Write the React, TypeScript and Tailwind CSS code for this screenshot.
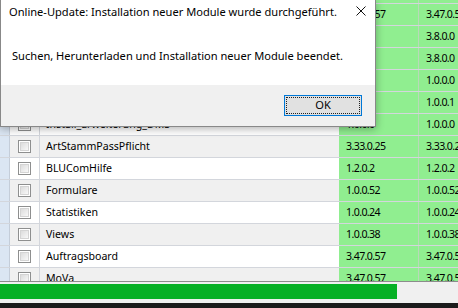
import React from 'react';

type Row = { name: string; v1: string; v2: string };

const ROWS: Row[] = [
  { name: 'BLUStart', v1: '3.47.0.57', v2: '3.47.0.57' },
  { name: 'BLUKernel', v1: '3.47.0.57', v2: '3.47.0.57' },
  { name: 'BLUDatenbank', v1: '3.8.0.0', v2: '3.8.0.0' },
  { name: 'BLUDatenbankUpdate', v1: '3.8.0.0', v2: '3.8.0.0' },
  { name: 'Install_Basis', v1: '1.0.0.0', v2: '1.0.0.0' },
  { name: 'Install_Updater', v1: '1.0.0.1', v2: '1.0.0.1' },
  { name: 'Install_Erweiterung_DMS', v1: '1.0.0.0', v2: '1.0.0.0' },
  { name: 'ArtStammPassPflicht', v1: '3.33.0.25', v2: '3.33.0.25' },
  { name: 'BLUComHilfe', v1: '1.2.0.2', v2: '1.2.0.2' },
  { name: 'Formulare', v1: '1.0.0.52', v2: '1.0.0.52' },
  { name: 'Statistiken', v1: '1.0.0.24', v2: '1.0.0.24' },
  { name: 'Views', v1: '1.0.0.38', v2: '1.0.0.38' },
  { name: 'Auftragsboard', v1: '3.47.0.57', v2: '3.47.0.57' },
  { name: 'MoVa', v1: '3.47.0.57', v2: '3.47.0.57' },
];

const font = "font-['Noto_Sans',sans-serif]";

const CheckBox: React.FC = () => (
  <span className="w-[13px] h-[13px] border border-[#8e8f8f] bg-white flex">
    <span className="flex-1 m-[1px] border border-[#d4d4d4] bg-gradient-to-br from-[#dcdcdc] to-[#f8f8f8]" />
  </span>
);

const App: React.FC = () => {
  return (
    <div className={`relative w-[458px] h-[308px] overflow-hidden bg-white text-black ${font}`}>
      {/* Modul-Tabelle */}
      <div className="h-[281px] overflow-hidden text-[10.6px]">
        <div className="-mt-[18px]">
          {ROWS.map((row, idx) => (
            <div
              key={row.name}
              className={`flex h-[22px] border-b border-[#d3d6dc] ${idx % 2 === 0 ? 'bg-white' : 'bg-[#f0f0f0]'}`}
            >
              <div className="w-[10px] bg-[#dbe6f3] border-r border-[#c4cdd9]" />
              <div className="w-[30px] flex items-center justify-center border-r border-[#d3d6dc] pr-[1px]">
                <CheckBox />
              </div>
              <div className="w-[299px] flex items-center pl-[6px] whitespace-nowrap overflow-hidden">{row.name}</div>
              <div className="w-[80px] flex items-center pl-[7px] bg-[#90ee90] border-r border-[#b9d9b9] tracking-[-0.6px]">
                {row.v1}
              </div>
              <div className="flex-1 flex items-center pl-[7px] bg-[#90ee90] whitespace-nowrap overflow-hidden tracking-[-0.6px]">
                {row.v2}
              </div>
            </div>
          ))}
        </div>
      </div>

      {/* Fortschrittsleiste */}
      <div className="h-[22px] border-t border-[#8c8c8c] bg-[#f0f0f0] pt-[2px]">
        <div className="h-[15px] w-[397px] bg-[#06b025]" />
      </div>
      <div className="h-[5px] bg-[#1b1b1b]" />

      {/* Dialog */}
      <div className="absolute left-0 top-0 w-[376px] h-[127px] flex flex-col bg-white text-[11.1px] border-x border-b border-[#888888] shadow-[0_2px_8px_rgba(0,0,0,0.3)]">
        <div className="h-[24px] flex items-center justify-between pl-[8px] pr-[9px]">
          <span className="whitespace-nowrap">Online-Update: Installation neuer Module wurde durchgeführt.</span>
          <svg width="10" height="10" viewBox="0 0 10 10" className="mb-[2px]">
            <path d="M0.5 0.5 L9.5 9.5 M9.5 0.5 L0.5 9.5" stroke="#111" strokeWidth="1" />
          </svg>
        </div>
        <div className="h-[61px] pt-[24px] pl-[11px] whitespace-nowrap">
          Suchen, Herunterladen und Installation neuer Module beendet.
        </div>
        <div className="flex-1 bg-[#f0f0f0] flex justify-end items-start pt-[10px] pr-[13px]">
          <button className="w-[78px] h-[21px] border border-[#0078d7] bg-[#e1e1e1] p-[1px] flex">
            <span className="flex-1 flex items-center justify-center border border-dotted border-[#222]">OK</span>
          </button>
        </div>
      </div>
    </div>
  );
};

export default App;
